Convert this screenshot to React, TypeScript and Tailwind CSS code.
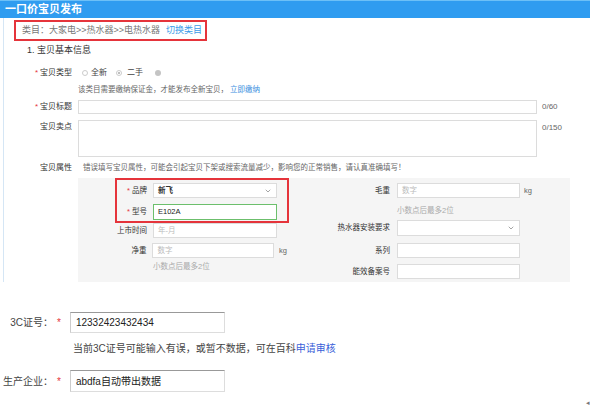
import { ChevronDown } from 'lucide-react'
import React from 'react'

type BoxProps = {
  className?: string
  green?: boolean
  children?: React.ReactNode
}

const Box: React.FC<BoxProps> = ({ className = '', green = false, children }) => (
  <div
    className={`flex items-center border bg-white px-[4px] text-[7.5px] ${green ? 'border-[#6cbf6c]' : 'border-[#dcdcdc]'} ${className}`}
  >
    {children}
  </div>
)

const Star = () => <span className="mr-[2px] text-[#e5343b]">*</span>

const Select: React.FC<BoxProps> = ({ className = '', children }) => (
  <Box className={`justify-between ${className}`}>
    <span className="font-bold text-[#333]">{children}</span>
    <ChevronDown size={8} strokeWidth={2} className="text-[#777]" />
  </Box>
)

export default function App() {
  return (
    <div className="relative h-[419px] w-[590px] overflow-hidden bg-white font-['Liberation_Sans','Noto_Sans_CJK_SC',sans-serif] text-[#333]">
      <div className="h-[18px] border-t border-[#6cc0f7] bg-[#2f9cf0] pl-[5px] text-[11px] font-bold leading-[17px] text-white">
        一口价宝贝发布
      </div>

      <div className="ml-[3px] flex h-[264px] flex-col border-l border-[#d5e6f5]">
        <div className="ml-[10px] mt-[2px] flex h-[21px] w-[193px] items-center border-2 border-[#e5343b] pl-[6px] text-[9px] text-[#777]">
          类目：大家电&gt;&gt;热水器&gt;&gt;电热水器
          <span className="ml-[6px] text-[#3a9be8]">切换类目</span>
        </div>

        <div className="mt-[4px] h-[10px] pl-[23px] text-[9px] leading-[10px] text-[#333]">1. 宝贝基本信息</div>

        {/* 宝贝类型 */}
        <div className="mt-[12px] flex h-[12px] items-center text-[8px]">
          <div className="w-[68px] text-right">
            <Star />
            宝贝类型
          </div>
          <div className="ml-[10px] flex items-center text-[#444]">
            <span className="h-[6px] w-[6px] rounded-full border border-[#ccc] bg-white" />
            <span className="ml-[3px]">全新</span>
            <span className="ml-[9px] flex h-[6px] w-[6px] items-center justify-center rounded-full border border-[#ccc] bg-white">
              <span className="h-[2px] w-[2px] rounded-full bg-[#aaa]" />
            </span>
            <span className="ml-[5px]">二手</span>
            <span className="ml-[12px] h-[6px] w-[6px] rounded-full bg-[#c4c4c4]" />
          </div>
        </div>
        <div className="ml-[74px] mt-[5px] flex h-[12px] items-center text-[7.5px] text-[#666]">
          该类目需要缴纳保证金，才能发布全新宝贝，
          <span className="ml-[2px] text-[#3a8fe0]">立即缴纳</span>
        </div>

        {/* 宝贝标题 */}
        <div className="mt-[4px] flex h-[14px] items-center text-[8px]">
          <div className="w-[68px] text-right">
            <Star />
            宝贝标题
          </div>
          <Box className="ml-[6px] h-[14px] w-[459px]" />
          <span className="ml-[5px] text-[#666]">0/60</span>
        </div>

        {/* 宝贝卖点 */}
        <div className="mt-[6px] flex h-[37px] items-start text-[8px]">
          <div className="w-[68px] pt-[1px] text-right">宝贝卖点</div>
          <Box className="ml-[6px] h-[37px] w-[459px]" />
          <span className="ml-[5px] pt-[2px] text-[#666]">0/150</span>
        </div>

        {/* 宝贝属性 */}
        <div className="mt-[5px] flex h-[12px] items-center">
          <div className="w-[68px] text-right text-[8px]">宝贝属性</div>
          <span className="ml-[11px] text-[7.5px] text-[#666]">
            错误填写宝贝属性，可能会引起宝贝下架或搜索流量减少，影响您的正常销售，请认真准确填写！
          </span>
        </div>

        <div className="ml-[74px] mt-[4px] flex h-[104px] w-[492px] bg-[#f5f5f5] text-[7.5px]">
          {/* left column */}
          <div className="ml-[37px] flex w-[174px] flex-col">
            <div className="flex h-[45px] flex-col border-2 border-[#e5343b] pt-[3px]">
              <div className="flex h-[15px] items-center">
                <div className="w-[30px] text-right">
                  <Star />
                  品牌
                </div>
                <Select className="ml-[6px] h-[15px] w-[124px]">新飞</Select>
              </div>
              <div className="mt-[6px] flex h-[16px] items-center">
                <div className="w-[30px] text-right">
                  <Star />
                  型号
                </div>
                <Box green className="ml-[6px] h-[16px] w-[124px] text-[#222]">
                  E102A
                </Box>
              </div>
            </div>
            <div className="flex h-[15px] items-center px-[2px]">
              <div className="w-[30px] whitespace-nowrap text-right">上市时间</div>
              <Box className="ml-[6px] h-[15px] w-[124px] text-[#bbb]">年-月</Box>
            </div>
            <div className="mt-[5px] flex h-[15px] items-center px-[2px]">
              <div className="w-[30px] text-right">净重</div>
              <Box className="ml-[6px] h-[15px] w-[124px] text-[#bbb]">数字</Box>
              <span className="ml-[5px] text-[#666]">kg</span>
            </div>
            <div className="mt-[4px] h-[10px] pl-[38px] leading-[10px] text-[#aaa]">小数点后最多2位</div>
          </div>

          {/* right column */}
          <div className="ml-[45px] flex w-[236px] flex-col">
            <div className="mt-[5px] flex h-[15px] items-center">
              <div className="w-[56px] text-right">毛重</div>
              <Box className="ml-[7px] h-[15px] w-[123px] text-[#bbb]">数字</Box>
              <span className="ml-[4px] text-[#666]">kg</span>
            </div>
            <div className="mt-[8px] h-[10px] pl-[63px] leading-[10px] text-[#aaa]">小数点后最多2位</div>
            <div className="mt-[4px] flex h-[16px] items-center">
              <div className="w-[56px] whitespace-nowrap text-right">热水器安装要求</div>
              <Select className="ml-[7px] h-[16px] w-[123px]" />
            </div>
            <div className="mt-[7px] flex h-[15px] items-center">
              <div className="w-[56px] text-right">系列</div>
              <Box className="ml-[7px] h-[15px] w-[123px]" />
            </div>
            <div className="mt-[6px] flex h-[15px] items-center">
              <div className="w-[56px] whitespace-nowrap text-right">能效备案号</div>
              <Box className="ml-[7px] h-[15px] w-[123px]" />
            </div>
          </div>
        </div>
      </div>

      {/* lower part */}
      <div className="mt-[30px] flex h-[21px] items-center text-[10px]">
        <div className="w-[53px] text-right text-[#444]">3C证号：</div>
        <span className="ml-[4px] text-[#e5343b]">*</span>
        <div className="ml-[9px] flex h-[21px] w-[155px] items-center border border-b-[#ddd] border-l-[#ccc] border-r-[#ddd] border-t-[#999] pl-[5px] text-[#222]">
          12332423432434
        </div>
      </div>
      <div className="ml-[73px] mt-[9px] flex h-[12px] items-center text-[10px] text-[#444]">
        当前3C证号可能输入有误，或暂不数据，可在百科
        <span className="text-[#3b5fd9]">申请审核</span>
      </div>
      <div className="mt-[16px] flex h-[22px] items-center text-[10px]">
        <div className="w-[53px] text-right text-[#444]">生产企业：</div>
        <span className="ml-[4px] text-[#e5343b]">*</span>
        <div className="ml-[9px] flex h-[22px] w-[155px] items-center border border-b-[#ddd] border-l-[#ccc] border-r-[#ddd] border-t-[#999] pl-[5px] text-[#222]">
          abdfa自动带出数据
        </div>
      </div>

      <span className="absolute right-[0px] top-[398px] text-[7px] text-[#777]">◂</span>
    </div>
  )
}
